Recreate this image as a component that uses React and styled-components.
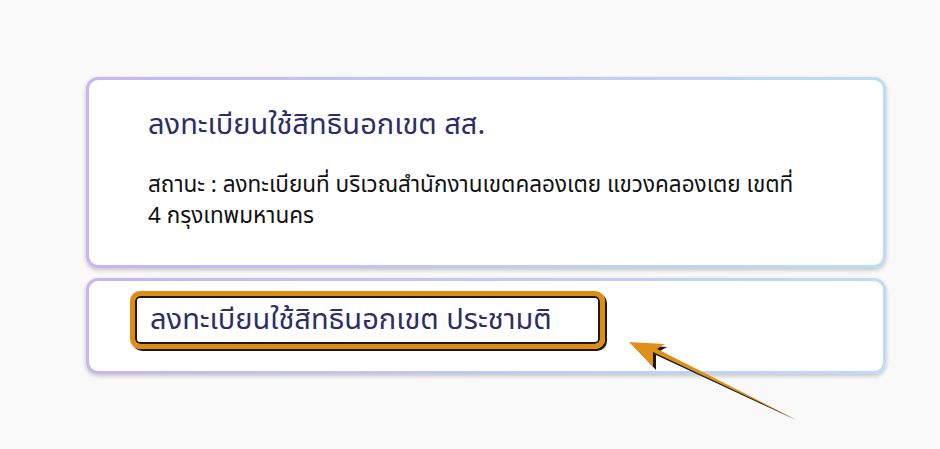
import styled, { createGlobalStyle } from "styled-components";

const Global = createGlobalStyle`
  html, body {
    margin: 0;
    padding: 0;
    background: #f9f9f9;
  }
  body {
    font-family: "Noto Sans Thai", "Noto Sans", "Liberation Sans", sans-serif;
  }
`;

const Page = styled.div`
  position: relative;
  width: 940px;
  height: 449px;
  box-sizing: border-box;
  padding: 77px 54px 0 86px;
  display: flex;
  flex-direction: column;
  gap: 10px;
  overflow: hidden;
`;

const Card = styled.div`
  box-sizing: border-box;
  border: 3px solid transparent;
  border-radius: 12px;
  background:
    linear-gradient(#fff, #fff) padding-box,
    linear-gradient(90deg, #c6b6f1, #bddcf6) border-box;
  box-shadow: 0 2px 4px rgba(0, 0, 0, 0.22);
  padding: ${(p) => p.$pad};
  min-height: ${(p) => p.$h}px;
`;

const Title = styled.h2`
  margin: 0;
  font-size: 29px;
  font-weight: 400;
  line-height: 38px;
  color: #2e2d66;
  white-space: nowrap;
`;

const Status = styled.p`
  margin: 26px 0 0;
  max-width: 655px;
  font-size: 22.5px;
  line-height: 31px;
  color: #111;
`;

const Highlight = styled.div`
  display: inline-block;
  box-sizing: border-box;
  width: 475px;
  border: 5px solid #e08b12;
  border-radius: 10px;
  box-shadow: inset 0 0 0 2px #1a1a1a, 2px 2px 0 #1a1a1a;
  padding: 5px 15px;
`;

const Arrow = styled.svg`
  position: absolute;
  left: 0;
  top: 0;
  pointer-events: none;
`;

export default function App() {
  return (
    <>
      <Global />
      <Page>
        <Card $pad="26px 0 0 59px" $h={191}>
          <Title>ลงทะเบียนใช้สิทธินอกเขต สส.</Title>
          <Status>
            สถานะ : ลงทะเบียนที่ บริเวณสำนักงานเขตคลองเตย แขวงคลองเตย เขตที่ 4 กรุงเทพมหานคร
          </Status>
        </Card>
        <Card $pad="10px 0 0 41px" $h={96}>
          <Highlight>
            <Title>ลงทะเบียนใช้สิทธินอกเขต ประชามติ</Title>
          </Highlight>
        </Card>
        <Arrow width="940" height="449" viewBox="0 0 940 449">
          <polygon points="633,345 667,347 660,351 796,420 656,355 656,370" fill="#1a1a1a" />
          <polygon points="629,342 665,344 657,349 795,419 653,352 653,367" fill="#e08f18" />
        </Arrow>
      </Page>
    </>
  );
}
